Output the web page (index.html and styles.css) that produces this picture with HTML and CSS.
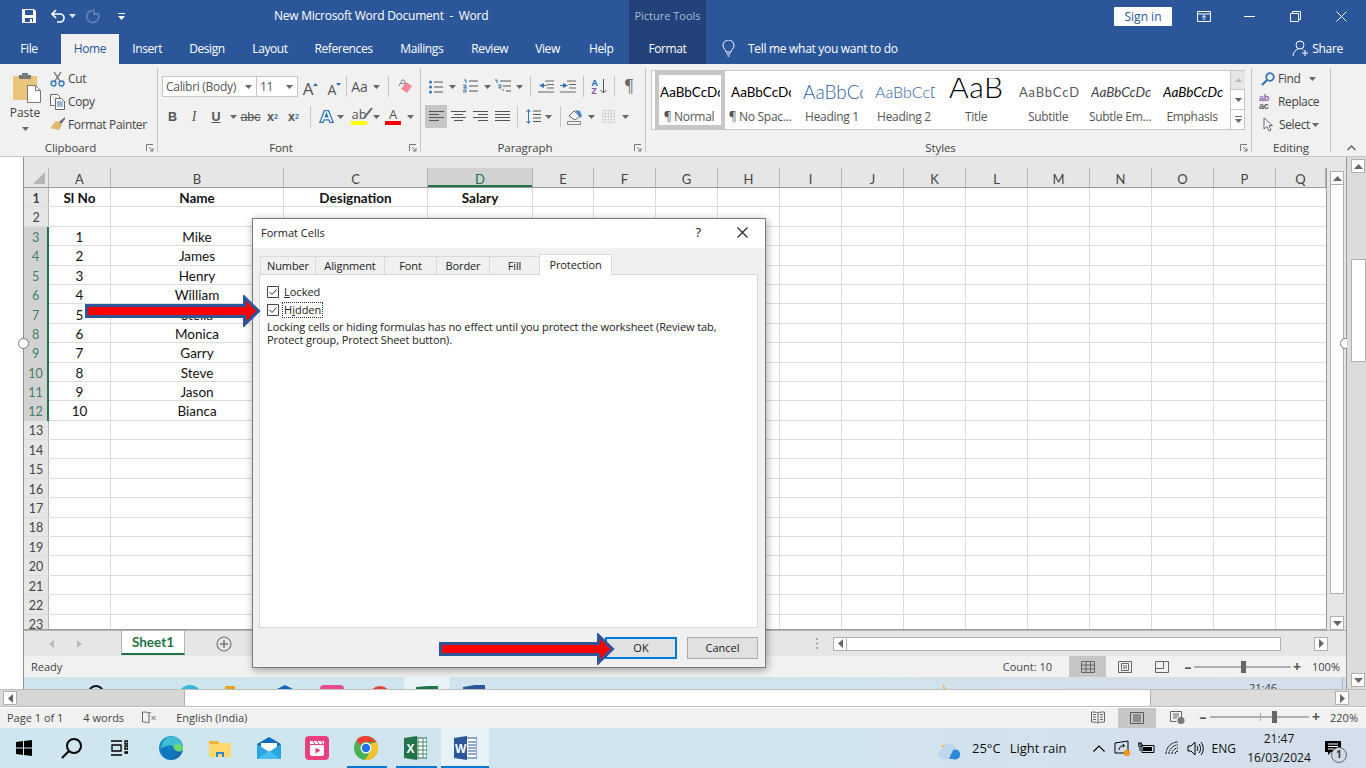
FILE: index.html
```html
<!DOCTYPE html>
<html lang="en">
<head>
<meta charset="utf-8">
<title>New Microsoft Word Document - Word</title>
<link rel="stylesheet" href="styles.css">
</head>
<body>
<div class="app">

<header class="titlebar">
  <div class="qat">
    <svg class="qi" width="16" height="16" viewBox="0 0 16 16"><path d="M1 1h12l2 2v12H1z" fill="#fff"/><path d="M4 2h8v5H4z" fill="#2b579a"/><path d="M4 10h8v4H4z" fill="#2b579a"/><path d="M9 11h2v3H9z" fill="#fff"/></svg>
    <svg class="qi2" width="16" height="16" viewBox="0 0 16 16"><path d="M6 2 2 6l4 4M2.500 6H10a4 4 0 0 1 0 8H7" fill="none" stroke="#fff" stroke-width="1.700"/></svg>
    <svg class="qc" width="7" height="4" viewBox="0 0 7 4"><path d="M0 0h7L3.500 4z" fill="#dfe6f1"/></svg>
    <svg class="qi3" width="15" height="16" viewBox="0 0 15 16"><path d="M9 1v5h5M13 5.500A6 6 0 1 1 7.500 2.500" fill="none" stroke="#5e80b4" stroke-width="1.800"/></svg>
    <svg class="qc2" width="7" height="7" viewBox="0 0 7 7"><path d="M0 0h7v1H0zM0 3h7L3.500 7z" fill="#fff"/></svg>
  </div>
  <div class="doc-title">New Microsoft Word Document&nbsp; -&nbsp; Word</div>
  <div class="tools-title">Picture Tools</div>
  <div class="win">
    <span class="signin">Sign in</span>
    <svg class="w-opt" width="14" height="11" viewBox="0 0 14 11"><path d="M.5.500h13v10H.500zM.5 3h13M7 9V4.500M5 6.500l2-2 2 2" fill="none" stroke="#fff"/></svg>
    <svg class="w-min" width="11" height="1" viewBox="0 0 11 1"><path d="M0 0h11v1H0z" fill="#fff"/></svg>
    <svg class="w-max" width="11" height="11" viewBox="0 0 11 11"><path d="M.5 2.500h8v8h-8zM2.500 2.500v-2h8v8h-2" fill="none" stroke="#fff"/></svg>
    <svg class="w-close" width="11" height="11" viewBox="0 0 11 11"><path d="M.5.500l10 10M10.500.500l-10 10" stroke="#fff" fill="none"/></svg>
  </div>
</header>

<nav class="tabs">
  <span class="tab t-file">File</span>
  <span class="tab home">Home</span>
  <span class="tab t-ins">Insert</span>
  <span class="tab t-des">Design</span>
  <span class="tab t-lay">Layout</span>
  <span class="tab t-ref">References</span>
  <span class="tab t-mai">Mailings</span>
  <span class="tab t-rev">Review</span>
  <span class="tab t-vie">View</span>
  <span class="tab t-hel">Help</span>
  <span class="tab format">Format</span>
  <svg class="bulb" width="13" height="17" viewBox="0 0 13 17"><path d="M4 12c0-2-3-3.500-3-6.500a5.500 5.500 0 0 1 11 0C12 8.500 9 10 9 12zM4.500 14h4M5.500 16h2" fill="none" stroke="#fff"/></svg>
  <span class="tell">Tell me what you want to do</span>
  <span class="share">
    <svg width="17" height="17" viewBox="0 0 17 17"><circle cx="8" cy="5" r="4" fill="none" stroke="#fff"/><path d="M1 16c0-4 3-6 5-7M11 9.500l1 1M10 13h6M13 10v6" fill="none" stroke="#fff"/></svg>
    Share
  </span>
</nav>

<section class="ribbon">
  <div class="group g-clip">
    <div class="g-body clip-body">
      <div class="paste">
        <svg width="30" height="31" viewBox="0 0 30 31"><path d="M1 4h24v24H1z" fill="#e9c47c"/><path d="M7 3h12v4H7z" fill="#7a7a7a"/><path d="M10 1h6v3h-6z" fill="#7a7a7a"/><path d="M15.500 13.500h8l5 5v12h-13z" fill="#fff" stroke="#777"/><path d="M23.500 13.500v5h5" fill="none" stroke="#777"/></svg>
        <span class="paste-l">Paste</span>
        <svg class="caret paste-c" width="7" height="4" viewBox="0 0 7 4"><path d="M0 0h7L3.500 4z"/></svg>
      </div>
      <div class="clip-list">
        <div class="clip-row"><svg width="15" height="16" viewBox="0 0 15 16"><path d="M4 1l6 9M11 1 5 10" stroke="#666" stroke-width="1.300" fill="none"/><circle cx="3.500" cy="12.500" r="2.500" fill="none" stroke="#2f75b5" stroke-width="1.300"/><circle cx="11.500" cy="12.500" r="2.500" fill="none" stroke="#2f75b5" stroke-width="1.300"/></svg>Cut</div>
        <div class="clip-row"><svg width="15" height="16" viewBox="0 0 15 16"><path d="M.5.500h7l2 2v2M.5.500v11h4" fill="#fff" stroke="#666"/><path d="M5.500 4.500h6l3 3v8h-9z" fill="#fff" stroke="#666"/><path d="M7 8h6M7 10h6M7 12h6" stroke="#2f75b5"/></svg>Copy</div>
        <div class="clip-row"><svg width="15" height="15" viewBox="0 0 15 15"><path d="M15 0 9 5l2 2 4-5z" fill="#666"/><path d="M8 4l4 4-3 5-9-2 3-2-2-1 3-1 0-2z" fill="#e0b870"/></svg>Format Painter</div>
      </div>
    </div>
    <div class="g-label">Clipboard<svg class="launch" width="8" height="8" viewBox="0 0 8 8"><path d="M.5 7V.5H7M3 3l4 4M4 7h3V4" fill="none" stroke="#777"/></svg></div>
  </div>

  <div class="group g-font">
    <div class="g-body font-body">
      <div class="t-row r1">
        <span class="combo c-name">Calibri (Body)<svg class="caret" width="7" height="4" viewBox="0 0 7 4"><path d="M0 0h7L3.500 4z"/></svg></span>
        <span class="combo c-size">11<svg class="caret" width="7" height="4" viewBox="0 0 7 4"><path d="M0 0h7L3.500 4z"/></svg></span>
        <span class="c w25 glyph-a big">A<svg class="up" width="5" height="3" viewBox="0 0 5 3"><path d="M0 3h5L2.500 0z" fill="#2f75b5"/></svg></span>
        <span class="c w23 glyph-a small">A<svg class="up" width="5" height="3" viewBox="0 0 5 3"><path d="M0 0h5L2.500 3z" fill="#2f75b5"/></svg></span>
        <span class="sep"></span>
        <span class="c w25 aa">Aa</span>
        <span class="c w8"><svg class="caret" width="7" height="4" viewBox="0 0 7 4"><path d="M0 0h7L3.500 4z"/></svg></span>
        <span class="sep ml8"></span>
        <span class="c w32"><svg width="15" height="15" viewBox="0 0 15 15"><path d="M8 3l6 4-5 7-6-4z" fill="#f28a98"/><path d="M1 7 4 1h2l2 5M2.500 4.500h4" fill="none" stroke="#888"/></svg></span>
      </div>
      <div class="t-row r2">
        <span class="c w21 bi b">B</span>
        <span class="c w22 bi i">I</span>
        <span class="c w22 bi u">U</span>
        <span class="c w12"><svg class="caret" width="7" height="4" viewBox="0 0 7 4"><path d="M0 0h7L3.500 4z"/></svg></span>
        <span class="c w23 bi st">abc</span>
        <span class="c w21 bi">x<sub class="sb">2</sub></span>
        <span class="c w21 bi">x<sup class="sb">2</sup></span>
        <span class="sep sep2"></span>
        <span class="c w19"><svg width="15" height="15" viewBox="0 0 18 17"><path d="M6.500 1.500h5L17 15.500h-4l-1-3H6l-1 3H1zM7.500 9h3L9 5z" fill="#fff" stroke="#2f75b5" stroke-width="1.600"/></svg></span>
        <span class="c w8"><svg class="caret" width="7" height="4" viewBox="0 0 7 4"><path d="M0 0h7L3.500 4z"/></svg></span>
        <span class="c w26 col ml2"><span class="hl-t">ab<svg class="hl-pen" width="10" height="11" viewBox="0 0 10 11"><path d="M9 0 1 10" stroke="#666" stroke-width="2"/></svg></span><i class="bar yel"></i></span>
        <span class="c w8"><svg class="caret" width="7" height="4" viewBox="0 0 7 4"><path d="M0 0h7L3.500 4z"/></svg></span>
        <span class="c w26 col"><span class="fc-t">A</span><i class="bar red"></i></span>
        <span class="c w8"><svg class="caret" width="7" height="4" viewBox="0 0 7 4"><path d="M0 0h7L3.500 4z"/></svg></span>
      </div>
    </div>
    <div class="g-label">Font<svg class="launch" width="8" height="8" viewBox="0 0 8 8"><path d="M.5 7V.5H7M3 3l4 4M4 7h3V4" fill="none" stroke="#777"/></svg></div>
  </div>

  <div class="group g-para">
    <div class="g-body para-body">
      <div class="t-row r1 p1">
        <span class="c w22"><svg width="14" height="14" viewBox="0 0 14 14"><path d="M5 2h9M5 7h9M5 12h9" stroke="#555"/><circle cx="1.500" cy="2" r="1.500" fill="#2f75b5"/><circle cx="1.500" cy="7" r="1.500" fill="#2f75b5"/><circle cx="1.500" cy="12" r="1.500" fill="#2f75b5"/></svg></span>
        <span class="c w10"><svg class="caret" width="7" height="4" viewBox="0 0 7 4"><path d="M0 0h7L3.500 4z"/></svg></span>
        <span class="c w26"><svg width="15" height="15" viewBox="0 0 15 15"><path d="M6 2h9M6 7h9M6 12h9" stroke="#555"/><path d="M1 1h2v3M0 6h3v2H1v1h3M0 11h3v2H0" fill="none" stroke="#2f75b5"/></svg></span>
        <span class="c w8"><svg class="caret" width="7" height="4" viewBox="0 0 7 4"><path d="M0 0h7L3.500 4z"/></svg></span>
        <span class="c w24"><svg width="16" height="15" viewBox="0 0 16 15"><path d="M5 2h11M8 7h8M11 12h5" stroke="#555"/><path d="M0 1h2v3M3 6h3v2H4v1h2M7 11h2" fill="none" stroke="#2f75b5"/></svg></span>
        <span class="c w8"><svg class="caret" width="7" height="4" viewBox="0 0 7 4"><path d="M0 0h7L3.500 4z"/></svg></span>
        <span class="sep ml7"></span>
        <span class="c w22 ml4"><svg width="16" height="13" viewBox="0 0 16 13"><path d="M7 1h9M9 4.500h7M9 8h7M0 12h16" stroke="#666"/><path d="M6 3v5L1 5.500zM6 5h3v1H6z" fill="#2f75b5"/></svg></span>
        <span class="c w22"><svg width="16" height="13" viewBox="0 0 16 13"><path d="M7 1h9M9 4.500h7M9 8h7M0 12h16" stroke="#666"/><path d="M3 3v5l5-2.500zM0 5h3v1H0z" fill="#2f75b5"/></svg></span>
        <span class="sep ml4"></span>
        <span class="c w30"><span class="az"><b>A</b><b class="z">Z</b></span><svg width="7" height="15" viewBox="0 0 7 15"><path d="M3.500 0v14M.5 11l3 3 3-3" fill="none" stroke="#555"/></svg></span>
        <span class="sep"></span>
        <span class="c w28 pil">¶</span>
      </div>
      <div class="t-row r2 p2">
        <span class="c w22 on"><svg width="15" height="11" viewBox="0 0 15 11"><path d="M0 .5h15M0 3.500h10M0 6.500h15M0 9.500h10" stroke="#555"/></svg></span>
        <span class="c w22"><svg width="15" height="11" viewBox="0 0 15 11"><path d="M0 .5h15M3 3.500h9M0 6.500h15M3 9.500h9" stroke="#555"/></svg></span>
        <span class="c w22"><svg width="15" height="11" viewBox="0 0 15 11"><path d="M0 .5h15M5 3.500h10M0 6.500h15M5 9.500h10" stroke="#555"/></svg></span>
        <span class="c w22"><svg width="15" height="11" viewBox="0 0 15 11"><path d="M0 .5h15M0 3.500h15M0 6.500h15M0 9.500h15" stroke="#555"/></svg></span>
        <span class="sep ml4"></span>
        <span class="c w22 ml4"><svg width="15" height="15" viewBox="0 0 15 15"><path d="M7 2h8M7 5.500h8M7 9h8M7 12.500h8" stroke="#555"/><path d="M2.500 1v13M.5 3l2-2.500 2 2.500M.5 12l2 2.500 2-2.500" fill="none" stroke="#2f75b5"/></svg></span>
        <span class="c w8"><svg class="caret" width="7" height="4" viewBox="0 0 7 4"><path d="M0 0h7L3.500 4z"/></svg></span>
        <span class="sep ml8"></span>
        <span class="c w24 ml2"><svg width="17" height="16" viewBox="0 0 17 16"><path d="M2 7l5-5 6 5-5 4z" fill="#fff" stroke="#666"/><path d="M8 1l5 1 2 5-2 2z" fill="#2f75b5" opacity=".85"/><path d="M.5 12.500h13v3H.500z" fill="#f1f1f1" stroke="#888"/></svg></span>
        <span class="c w8"><svg class="caret" width="7" height="4" viewBox="0 0 7 4"><path d="M0 0h7L3.500 4z"/></svg></span>
        <span class="c w26"><svg width="13" height="13" viewBox="0 0 13 13"><path d="M.5.500h12v12H.500zM.5 6.500h12M6.500.500v12M3.500.500v12M9.500.500v12M.5 3.500h12M.5 9.500h12" fill="none" stroke="#c8bcc8" stroke-dasharray="1 1"/></svg></span>
        <span class="c w8"><svg class="caret" width="7" height="4" viewBox="0 0 7 4"><path d="M0 0h7L3.500 4z"/></svg></span>
      </div>
    </div>
    <div class="g-label">Paragraph<svg class="launch" width="8" height="8" viewBox="0 0 8 8"><path d="M.5 7V.5H7M3 3l4 4M4 7h3V4" fill="none" stroke="#777"/></svg></div>
  </div>

  <div class="group g-styles">
    <div class="g-body">
      <div class="gallery">
        <div class="sty first"><span class="pv pv-n">AaBbCcDc</span><span class="sl">¶ Normal</span></div>
        <div class="sty"><span class="pv pv-n">AaBbCcDc</span><span class="sl">¶ No Spac...</span></div>
        <div class="sty"><span class="pv pv-h1">AaBbCc</span><span class="sl">Heading 1</span></div>
        <div class="sty"><span class="pv pv-h2">AaBbCcD</span><span class="sl">Heading 2</span></div>
        <div class="sty"><span class="pv pv-t">AaB</span><span class="sl">Title</span></div>
        <div class="sty"><span class="pv pv-s">AaBbCcD</span><span class="sl">Subtitle</span></div>
        <div class="sty"><span class="pv pv-se">AaBbCcDc</span><span class="sl">Subtle Em...</span></div>
        <div class="sty"><span class="pv pv-e">AaBbCcDc</span><span class="sl">Emphasis</span></div>
        <div class="gal-sb">
          <span class="gb dim"><svg width="7" height="4" viewBox="0 0 7 4"><path d="M0 4h7L3.500 0z" fill="#bbb"/></svg></span>
          <span class="gb"><svg width="7" height="4" viewBox="0 0 7 4"><path d="M0 0h7L3.500 4z" fill="#666"/></svg></span>
          <span class="gb"><svg width="7" height="7" viewBox="0 0 7 7"><path d="M0 0h7v1H0zM0 3h7L3.500 7z" fill="#666"/></svg></span>
        </div>
      </div>
    </div>
    <div class="g-label">Styles<svg class="launch" width="8" height="8" viewBox="0 0 8 8"><path d="M.5 7V.5H7M3 3l4 4M4 7h3V4" fill="none" stroke="#777"/></svg></div>
  </div>

  <div class="group g-edit">
    <div class="g-body edit-body">
      <div class="clip-row"><svg width="14" height="14" viewBox="0 0 14 14"><circle cx="9" cy="5" r="3.800" fill="none" stroke="#2f75b5" stroke-width="1.800"/><path d="M6 8l-5 5" stroke="#2f75b5" stroke-width="2.200"/></svg>Find<svg class="caret e-c" width="7" height="4" viewBox="0 0 7 4"><path d="M0 0h7L3.500 4z"/></svg></div>
      <div class="clip-row rep"><span class="abac"><b class="ab">ab</b><b class="ac">ac</b></span>Replace</div>
      <div class="clip-row sel"><svg width="10" height="15" viewBox="0 0 10 15"><path d="M1 1v11l3-2.500 2 4.500 2-1-2-4.500h3.500z" fill="#fff" stroke="#666"/></svg>Select<svg class="caret s-c" width="7" height="4" viewBox="0 0 7 4"><path d="M0 0h7L3.500 4z"/></svg></div>
    </div>
    <div class="g-label g-plain">Editing</div>
  </div>
  <svg class="collapse" width="9" height="6" viewBox="0 0 9 6"><path d="M.5 5l4-4 4 4" fill="none" stroke="#666" stroke-width="1.500"/></svg>
</section>

<main class="doc">
  <div class="picture">
    <div class="sheet-wrap">
      <div class="sheet">
        <div class="row hdr"><span class="rh corner"><svg width="12" height="12" viewBox="0 0 12 12"><path d="M12 0v12H0z" fill="#b5b5b5"/></svg></span><span class="ca">A</span><span class="cb">B</span><span class="cc">C</span><span class="cd act">D</span><span class="ce">E</span><span class="ch">F</span><span class="ch">G</span><span class="ch">H</span><span class="ch">I</span><span class="ch">J</span><span class="ch">K</span><span class="ch">L</span><span class="ch">M</span><span class="ch">N</span><span class="ch">O</span><span class="ch">P</span><span class="cq">Q</span></div>
        <div class="row bold"><span class="rh">1</span><span class="ca">Sl No</span><span class="cb">Name</span><span class="cc">Designation</span><span class="cd">Salary</span><span class="ce"></span><span class="rest"></span></div>
        <div class="row"><span class="rh">2</span><span class="ca"></span><span class="cb"></span><span class="cc"></span><span class="cd"></span><span class="ce"></span><span class="rest"></span></div>
        <div class="row"><span class="rh sel">3</span><span class="ca">1</span><span class="cb">Mike</span><span class="cc"></span><span class="cd"></span><span class="ce"></span><span class="rest"></span></div>
        <div class="row"><span class="rh sel">4</span><span class="ca">2</span><span class="cb">James</span><span class="cc"></span><span class="cd"></span><span class="ce"></span><span class="rest"></span></div>
        <div class="row"><span class="rh sel">5</span><span class="ca">3</span><span class="cb">Henry</span><span class="cc"></span><span class="cd"></span><span class="ce"></span><span class="rest"></span></div>
        <div class="row"><span class="rh sel">6</span><span class="ca">4</span><span class="cb">William</span><span class="cc"></span><span class="cd"></span><span class="ce"></span><span class="rest"></span></div>
        <div class="row"><span class="rh sel">7</span><span class="ca">5</span><span class="cb">Stella</span><span class="cc"></span><span class="cd"></span><span class="ce"></span><span class="rest"></span></div>
        <div class="row"><span class="rh sel">8</span><span class="ca">6</span><span class="cb">Monica</span><span class="cc"></span><span class="cd"></span><span class="ce"></span><span class="rest"></span></div>
        <div class="row"><span class="rh sel">9</span><span class="ca">7</span><span class="cb">Garry</span><span class="cc"></span><span class="cd"></span><span class="ce"></span><span class="rest"></span></div>
        <div class="row"><span class="rh sel">10</span><span class="ca">8</span><span class="cb">Steve</span><span class="cc"></span><span class="cd"></span><span class="ce"></span><span class="rest"></span></div>
        <div class="row"><span class="rh sel">11</span><span class="ca">9</span><span class="cb">Jason</span><span class="cc"></span><span class="cd"></span><span class="ce"></span><span class="rest"></span></div>
        <div class="row"><span class="rh sel">12</span><span class="ca">10</span><span class="cb">Bianca</span><span class="cc"></span><span class="cd"></span><span class="ce"></span><span class="rest"></span></div>
        <div class="row"><span class="rh">13</span><span class="ca"></span><span class="cb"></span><span class="cc"></span><span class="cd"></span><span class="ce"></span><span class="rest"></span></div>
        <div class="row"><span class="rh">14</span><span class="ca"></span><span class="cb"></span><span class="cc"></span><span class="cd"></span><span class="ce"></span><span class="rest"></span></div>
        <div class="row"><span class="rh">15</span><span class="ca"></span><span class="cb"></span><span class="cc"></span><span class="cd"></span><span class="ce"></span><span class="rest"></span></div>
        <div class="row"><span class="rh">16</span><span class="ca"></span><span class="cb"></span><span class="cc"></span><span class="cd"></span><span class="ce"></span><span class="rest"></span></div>
        <div class="row"><span class="rh">17</span><span class="ca"></span><span class="cb"></span><span class="cc"></span><span class="cd"></span><span class="ce"></span><span class="rest"></span></div>
        <div class="row"><span class="rh">18</span><span class="ca"></span><span class="cb"></span><span class="cc"></span><span class="cd"></span><span class="ce"></span><span class="rest"></span></div>
        <div class="row"><span class="rh">19</span><span class="ca"></span><span class="cb"></span><span class="cc"></span><span class="cd"></span><span class="ce"></span><span class="rest"></span></div>
        <div class="row"><span class="rh">20</span><span class="ca"></span><span class="cb"></span><span class="cc"></span><span class="cd"></span><span class="ce"></span><span class="rest"></span></div>
        <div class="row"><span class="rh">21</span><span class="ca"></span><span class="cb"></span><span class="cc"></span><span class="cd"></span><span class="ce"></span><span class="rest"></span></div>
        <div class="row"><span class="rh">22</span><span class="ca"></span><span class="cb"></span><span class="cc"></span><span class="cd"></span><span class="ce"></span><span class="rest"></span></div>
        <div class="row"><span class="rh">23</span><span class="ca"></span><span class="cb"></span><span class="cc"></span><span class="cd"></span><span class="ce"></span><span class="rest"></span></div>
      </div>
      <div class="x-vscroll">
        <span class="sbtn"><svg width="9" height="5" viewBox="0 0 9 5"><path d="M0 5h9L4.500 0z" fill="#666"/></svg></span>
        <span class="x-thumb"></span>
        <span class="sbtn"><svg width="9" height="5" viewBox="0 0 9 5"><path d="M0 0h9L4.500 5z" fill="#666"/></svg></span>
      </div>
    </div>
    <div class="sheet-tabs">
      <svg class="nav-l" width="5" height="8" viewBox="0 0 5 8"><path d="M5 0v8L0 4z" fill="#bbb"/></svg>
      <svg class="nav-r" width="5" height="8" viewBox="0 0 5 8"><path d="M0 0v8l5-4z" fill="#bbb"/></svg>
      <span class="s-tab">Sheet1</span>
      <svg class="plus" width="16" height="16" viewBox="0 0 16 16"><circle cx="8" cy="8" r="7" fill="none" stroke="#777" stroke-width="1.200"/><path d="M4 8h8M8 4v8" stroke="#777" stroke-width="1.500"/></svg>
      <svg class="dots" width="2" height="11" viewBox="0 0 2 11"><path d="M0 0h2v2H0zM0 4.500h2v2H0zM0 9h2v2H0z" fill="#aaa"/></svg>
      <div class="x-hscroll">
        <span class="sbtn"><svg width="5" height="9" viewBox="0 0 5 9"><path d="M5 0v9L0 4.500z" fill="#666"/></svg></span>
        <span class="x-hthumb"></span>
        <span class="sbtn"><svg width="5" height="9" viewBox="0 0 5 9"><path d="M0 0v9l5-4.500z" fill="#666"/></svg></span>
      </div>
    </div>
    <div class="x-status">
      <span class="ready">Ready</span>
      <span class="count">Count: 10</span>
      <span class="v-btn on"><svg width="14" height="12" viewBox="0 0 14 12"><path d="M.5.500h13v11H.500zM5 .5v11M9.500.500v11M.5 4h13M.5 8h13" fill="none" stroke="#666"/></svg></span>
      <span class="v-btn"><svg width="14" height="12" viewBox="0 0 14 12"><path d="M.5.500h13v11H.500zM3.500 2.500h7v7h-7zM5 5h4M5 7h4" fill="none" stroke="#666"/></svg></span>
      <span class="v-btn"><svg width="14" height="12" viewBox="0 0 14 12"><path d="M.5.500h13v11H.500zM.5 7.500h8V.500" fill="none" stroke="#666"/></svg></span>
      <span class="zoomer x-z"><i class="zm">–</i><span class="track"><b class="thumb"></b></span><i class="zp">+</i></span>
      <span class="pct">100%</span>
    </div>
    <svg class="strip" width="1322" height="12" viewBox="0 0 1322 12">
      <defs><linearGradient id="sg"><stop offset="0" stop-color="#cfe6ef"/><stop offset=".55" stop-color="#d0e4ee"/><stop offset="1" stop-color="#d5deeb"/></linearGradient></defs>
      <rect width="1322" height="12" fill="url(#sg)"/>
      <rect x="380" width="46" height="12" fill="#e8f3f8"/>
      <circle cx="72" cy="16" r="7" fill="none" stroke="#111" stroke-width="2"/>
      <circle cx="166" cy="20" r="12" fill="#30b9d8"/>
      <rect x="201" y="9" width="10" height="3" fill="#e8a21b"/>
      <path d="M261 8l8 4h-16z" fill="#0f6cbd"/>
      <rect x="296" y="8" width="24" height="8" rx="4" fill="#ec4a8f"/>
      <circle cx="356" cy="20" r="11" fill="#e94235"/>
      <path d="M392 10l12-1h10v3h-22z" fill="#21734a"/>
      <path d="M439 10l12-2h10v4h-22z" fill="#2b579a"/>
      <path d="M919 7l3 5h-3z" fill="#eebb55"/>
      <text x="1225" y="15" class="strip-t">21:46</text>
      <path d="M1318.500 0v12" stroke="#a9b4c4"/>
    </svg>
    <span class="handle h-l"></span>
    <span class="handle h-r"></span>
  </div>
  <div class="w-vscroll">
    <span class="sbtn"><svg width="9" height="5" viewBox="0 0 9 5"><path d="M0 5h9L4.500 0z" fill="#666"/></svg></span>
    <span class="w-thumb"></span>
    <span class="sbtn"><svg width="9" height="5" viewBox="0 0 9 5"><path d="M0 0h9L4.500 5z" fill="#666"/></svg></span>
  </div>
</main>

<div class="w-hscroll">
  <span class="sbtn"><svg width="5" height="9" viewBox="0 0 5 9"><path d="M5 0v9L0 4.500z" fill="#666"/></svg></span>
  <span class="w-htrack"></span>
  <span class="w-hthumb"></span>
  <span class="w-htrack2"></span>
  <span class="sbtn"><svg width="5" height="9" viewBox="0 0 5 9"><path d="M0 0v9l5-4.500z" fill="#666"/></svg></span>
</div>

<div class="w-status">
  <span class="st-a">Page 1 of 1</span>
  <span class="st-b">4 words</span>
  <svg class="st-i" width="14" height="13" viewBox="0 0 14 13"><path d="M7 2C5 1 3 1 .5 1v10c2.500 0 4.500 0 6.500 1V2M7 2c.500-.300 1-.500 2-.700" fill="none" stroke="#666"/><path d="M9.500 5l4 4M13.500 5l-4 4" stroke="#666"/></svg>
  <span class="st-c">English (India)</span>
  <svg class="st-v1" width="14" height="13" viewBox="0 0 14 13"><path d="M7 2C5 1 3 1 .5 1v10c2.500 0 4.500 0 6.500 1 2-1 4-1 6.500-1V1C11 1 9 1 7 2zM7 2v10M2 3.500h3M2 6h3M2 8.500h3M9 3.500h3M9 6h3M9 8.500h3" fill="none" stroke="#666"/></svg>
  <span class="v-btn2"><svg width="14" height="12" viewBox="0 0 14 12"><path d="M.5.500h13v11H.500zM3 3h8M3 5h8M3 7h8M3 9h8" fill="none" stroke="#555"/></svg></span>
  <svg class="st-v3" width="15" height="13" viewBox="0 0 15 13"><path d="M.5.500h11v7M.5.500v10h6M3 3h6M3 5h6M3 7h4" fill="none" stroke="#666"/><circle cx="11" cy="9.500" r="3.500" fill="#777"/></svg>
  <span class="zoomer w-z"><i class="zm">–</i><span class="track"><u class="tick"></u><b class="thumb"></b></span><i class="zp">+</i></span>
  <span class="pct">220%</span>
</div>

<footer class="taskbar">
  <svg class="tb-win" width="16" height="16" viewBox="0 0 16 16"><path d="M0 2l7-1v6.500H0zM8 1l8-1v7.500H8zM0 8.500h7V15l-7-1zM8 8.500h8V16l-8-1z" fill="#000"/></svg>
  <svg class="tb-search" width="22" height="22" viewBox="0 0 22 22"><circle cx="13" cy="9" r="7" fill="none" stroke="#000" stroke-width="2"/><path d="M8 14l-7 7" stroke="#000" stroke-width="2.200"/></svg>
  <svg class="tb-tv" width="17" height="16" viewBox="0 0 17 16"><path d="M0 1h11M0 15h11M1 5h9v6H1zM14 1h3v3h-3zM14 6h3v3h-3zM14 13h3v-1h-3z" fill="none" stroke="#000" stroke-width="1.300"/></svg>
  <svg class="tb-edge" width="24" height="24" viewBox="0 0 24 24"><defs><linearGradient id="eg" x1="0" y1="0" x2="1" y2="1"><stop offset="0" stop-color="#1d9bd8"/><stop offset="1" stop-color="#0b5fa8"/></linearGradient></defs><circle cx="12" cy="12" r="12" fill="url(#eg)"/><path d="M13 .500C19 1 24 6 24 12c0 3-3 4-6 3-4-1-2-5-6-6-3 0-6 1-10 4C3 6 7 0 13 .500z" fill="#3fbfd0"/><path d="M24 12c0 3-3 4-6 3-3-1-3-3-4-5 3-3 8-3 10 2z" fill="#6fd66a"/><path d="M9 13c0 4 4 7 9 6-2 3-6 5-9 4-4-1-6-6-7-10 2-2 6-3 7 0z" fill="#0f75bc"/></svg>
  <svg class="tb-exp" width="22" height="18" viewBox="0 0 22 18"><path d="M0 2h8v3H0z" fill="#e8a21b"/><path d="M0 4h22v14H0z" fill="#ffd76a"/><path d="M0 2h9l1 3H0z" fill="#f2b233"/><path d="M7 13h8v5H7z" fill="#2f86c9"/><path d="M9 15h4v3H9z" fill="#ffd76a"/></svg>
  <svg class="tb-mail" width="24" height="22" viewBox="0 0 24 22"><path d="M12 0 24 7v15H0V7z" fill="#0f6cbd"/><path d="M4 6h16v6l-8 5-8-5z" fill="#fff"/><path d="M0 7l12 8 12-8v15H0z" fill="#29a5e4"/><path d="M0 22l12-8 12 8z" fill="#49bdf0"/></svg>
  <svg class="tb-clip" width="24" height="24" viewBox="0 0 24 24"><rect width="24" height="24" rx="4" fill="#e9407f"/><path d="M5 9h14v9a2 2 0 0 1-2 2H7a2 2 0 0 1-2-2z" fill="#fff"/><path d="M5 5h14v3H5z" fill="#fff"/><path d="M8 5l2 3M12 5l2 3M16 5l2 3" stroke="#e9407f"/><path d="M10.500 11.500v6l5-3z" fill="#e9407f"/></svg>
  <svg class="tb-chrome" width="24" height="24" viewBox="0 0 24 24"><circle cx="12" cy="12" r="12" fill="#4caf50"/><path d="M12 0a12 12 0 0 1 10.400 6H12a6 6 0 0 0-5.600 3.600L2.400 4A12 12 0 0 1 12 0z" fill="#ea4335"/><path d="M22.400 6A12 12 0 0 1 11 24l5.200-8.500A6 6 0 0 0 16 8z" fill="#fbc02d"/><circle cx="12" cy="12" r="5.500" fill="#fff"/><circle cx="12" cy="12" r="4.200" fill="#1a73e8"/></svg>
  <svg class="tb-xl" width="23" height="24" viewBox="0 0 23 24"><path d="M8 2h15v20H8z" fill="#fff" stroke="#21734a"/><path d="M14 2v20M19 2v20M8 6h15M8 10h15M8 14h15M8 18h15" stroke="#21734a" stroke-width=".8"/><path d="M0 2 13 0v24L0 22z" fill="#21734a"/><text x="2.500" y="16.500" class="logo-t">X</text></svg>
  <svg class="tb-wd" width="23" height="24" viewBox="0 0 23 24"><path d="M8 2h15v20H8z" fill="#fff" stroke="#2b579a"/><path d="M14 6h8M14 9h8M14 12h8M14 15h8M14 18h8" stroke="#2b579a"/><path d="M0 2 13 0v24L0 22z" fill="#2b579a"/><text x="1" y="16.500" class="logo-t">W</text></svg>
  <svg class="tb-wx" width="24" height="24" viewBox="0 0 24 24"><path d="M10 2a7 7 0 0 0 8 9 7 7 0 0 1-8-9z" fill="#f3b13a"/><path d="M4 10l4 1" stroke="#f3b13a" stroke-width="2"/><path d="M6 23a5 5 0 0 1-1-10 7 7 0 0 1 13-1 6 6 0 0 1 1 11z" fill="#bcd6ee"/><path d="M15 14a5 5 0 1 1 0 9h-4z" fill="#2b88d8"/></svg>
  <span class="tb-temp">25°C</span>
  <span class="tb-cond">Light rain</span>
  <svg class="tb-up" width="12" height="7" viewBox="0 0 12 7"><path d="M.5 6.500 6 1l5.500 5.500" fill="none" stroke="#000" stroke-width="1.200"/></svg>
  <svg class="tb-sec" width="17" height="16" viewBox="0 0 17 16"><path d="M1 3l13-2v12H1z" fill="none" stroke="#000"/><path d="M5 10c0-3 3-5 5-4M9 4l1.500 2-2 1" fill="none" stroke="#000"/><circle cx="13" cy="13" r="3.200" fill="#f7931e"/></svg>
  <svg class="tb-bat" width="17" height="12" viewBox="0 0 17 12"><path d="M4 3.500h12v7H4z" fill="none" stroke="#000"/><path d="M5 5h9v4H5z" fill="#000"/><path d="M1 0v2M3 0v2M0 2h4v2H0zM2 4v5" fill="none" stroke="#000"/></svg>
  <svg class="tb-wifi" width="14" height="14" viewBox="0 0 14 14"><path d="M1 13a12 12 0 0 1 12-12M4 13a9 9 0 0 1 9-9M7 13a6 6 0 0 1 6-6M10 13a3 3 0 0 1 3-3" fill="none" stroke="#000" stroke-dasharray="2 .6"/></svg>
  <svg class="tb-vol" width="17" height="15" viewBox="0 0 17 15"><path d="M1 5h3l4-4v13l-4-4H1zM10 5c1 1.500 1 3.500 0 5M12 3c2 2.500 2 6.500 0 9M14 1c3 4 3 9 0 13" fill="none" stroke="#000"/></svg>
  <span class="tb-eng">ENG</span>
  <span class="tb-clock"><span>21:47</span><span>16/03/2024</span></span>
  <span class="tb-note"><svg width="16" height="14" viewBox="0 0 16 14"><path d="M0 0h16v11H6l-3 3v-3H0z" fill="#000"/><path d="M3 3h10M3 5.500h10M3 8h6" stroke="#fff"/></svg><span class="badge">1</span></span>
  <i class="run run-ch"></i>
  <i class="run run-xl"></i>
  <i class="active-tile"></i>
</footer>

<section class="dialog">
  <div class="d-title"><span>Format Cells</span><span class="d-help">?</span><svg class="d-x" width="11" height="11" viewBox="0 0 11 11"><path d="M.5.500l10 10M10.500.500l-10 10" stroke="#222" fill="none" stroke-width="1.100"/></svg></div>
  <div class="d-tabs">
    <span class="d-tab t1">Number</span><span class="d-tab t2">Alignment</span><span class="d-tab t3">Font</span><span class="d-tab t4">Border</span><span class="d-tab t5">Fill</span><span class="d-tab active">Protection</span>
  </div>
  <div class="d-panel">
    <div class="chk"><svg width="12" height="12" viewBox="0 0 12 12"><path d="M.5.500h11v11H.500z" fill="#fff" stroke="#444"/><path d="M2.500 6l2.500 2.500 4.500-5" fill="none" stroke="#333"/></svg><span class="lab"><u>L</u>ocked</span></div>
    <div class="chk"><svg width="12" height="12" viewBox="0 0 12 12"><path d="M.5.500h11v11H.500z" fill="#fff" stroke="#444"/><path d="M2.500 6l2.500 2.500 4.500-5" fill="none" stroke="#333"/></svg><span class="lab focus">H<u>i</u>dden</span></div>
    <p class="d-note">Locking cells or hiding formulas has no effect until you protect the worksheet (Review tab,<br>Protect group, Protect Sheet button).</p>
  </div>
  <div class="d-btns"><span class="d-btn ok">OK</span><span class="d-btn">Cancel</span></div>
</section>

<svg class="arrow a1" width="178" height="32" viewBox="0 0 178 32"><path d="M2.500 10.500h158v-8l14 13.500-14 13.500v-8h-158z" fill="#f00" stroke="#2f5597" stroke-width="3"/></svg>
<svg class="arrow a2" width="178" height="32" viewBox="0 0 178 32"><path d="M2.500 10.500h158v-8l14 13.500-14 13.500v-8h-158z" fill="#f00" stroke="#2f5597" stroke-width="3"/></svg>

</div>
</body>
</html>
```

FILE: styles.css
```css
* { box-sizing: border-box; }
html, body { margin: 0; padding: 0; }
body { width: 1366px; height: 768px; overflow: hidden; background: #fff; font-family: "Open Sans", "Noto Sans", sans-serif; font-size: 12px; color: #444; }
svg { flex: none; display: block; }
.app { position: relative; width: 1366px; height: 768px; display: flex; flex-direction: column; overflow: hidden; }

/* title bar */
.titlebar { height: 34px; background: #2b579a; display: flex; align-items: flex-start; color: #fff; flex: none; }
.qat { width: 274px; height: 32px; display: flex; align-items: center; flex: none; }
.qi { margin-left: 21px; }
.qi2 { margin-left: 13px; }
.qc { margin-left: 3px; }
.qi3 { margin-left: 9px; }
.qc2 { margin-left: 18px; }
.doc-title { width: 355px; line-height: 32px; font-size: 12px; letter-spacing: -.25px; flex: none; }
.tools-title { width: 77px; height: 34px; background: #224279; color: #a9bcd8; line-height: 32px; text-align: center; font-size: 11px; flex: none; }
.win { display: flex; align-items: center; height: 32px; flex: 1; }
.signin { margin-left: 408px; width: 58px; height: 19px; background: #fff; color: #2b579a; text-align: center; line-height: 19px; font-size: 12px; border-radius: 1px; }
.w-opt { margin-left: 25px; }
.w-min { margin-left: 33px; }
.w-max { margin-left: 35px; }
.w-close { margin-left: 35px; }

/* tabs */
.tabs { height: 30px; background: #2b579a; display: flex; align-items: stretch; flex: none; color: #fff; }
.tab { line-height: 29px; font-size: 12px; letter-spacing: -.4px; white-space: nowrap; text-align: center; flex: none; }
.t-file { width: 58px; margin-right: 3px; }
.home { width: 58px; background: #f1f1f1; color: #2b579a; }
.t-ins { width: 56.5px; }
.t-des { width: 63px; }
.t-lay { width: 63px; }
.t-ref { width: 84px; }
.t-mai { width: 72.5px; }
.t-rev { width: 63.500px; }
.t-vie { width: 52px; }
.t-hel { width: 55.5px; }
.format { width: 77px; background: #224279; }
.bulb { margin: 6px 0 0 16px; }
.tell { margin-left: 13px; line-height: 29px; letter-spacing: -.3px; white-space: nowrap; }
.share { margin-left: auto; margin-right: 23px; display: flex; align-items: center; gap: 3px; height: 29px; letter-spacing: -.3px; }

/* ribbon */
.ribbon { height: 93px; background: #f1f1f1; border-bottom: 1px solid #c6c6c6; display: flex; padding-top: 4px; flex: none; position: relative; }
.group { height: 84px; border-right: 1px solid #c6c6c6; display: flex; flex-direction: column; flex: none; }
.g-body { flex: 1; min-height: 0; }
.g-label { height: 16px; text-align: center; line-height: 23px; font-size: 11.5px; letter-spacing: -.1px; color: #444; position: relative; padding-right: 16px; }
.g-plain { padding-right: 0; }
.launch { position: absolute; right: 3px; bottom: 0; }
.g-clip { width: 158px; }
.g-font { width: 263px; }
.g-para { width: 225px; }
.g-styles { width: 606px; }
.g-edit { width: 79px; }
.collapse { position: absolute; right: 10px; top: 81px; }
.clip-body { display: flex; }
.paste { width: 40px; margin-left: 5px; padding-top: 4px; display: flex; flex-direction: column; align-items: center; flex: none; }
.paste svg:first-child { margin-left: 4px; }
.paste-l { line-height: 14px; margin-top: 3px; }
.caret { fill: #666; flex: none; }
.paste-c { margin-top: 7px; margin-left: 0; }
.clip-list { display: flex; flex-direction: column; margin-left: 5px; margin-top: -1px; }
.clip-row { height: 23px; display: flex; align-items: center; gap: 3px; white-space: nowrap; letter-spacing: -.35px; }
.t-row { display: flex; align-items: center; }
.font-body { padding: 8px 0 0 4px; }
.r1 { height: 21px; }
.r2 { height: 23px; margin-top: 8px; }
.combo { height: 21px; border: 1px solid #c6c6c6; background: #fff; display: flex; align-items: center; justify-content: space-between; padding: 0 4px 0 3px; color: #555; flex: none; font-size: 12px; letter-spacing: -.3px; }
.c-name { width: 95px; }
.c-size { width: 42px; margin-left: -1px; }
.c { display: flex; align-items: center; justify-content: center; height: 100%; flex: none; position: relative; }
.w8 { width: 8px; } .w10 { width: 10px; } .w12 { width: 12px; }
.w19 { width: 19px; } .w21 { width: 21px; } .w22 { width: 22px; } .w23 { width: 23px; }
.w24 { width: 24px; } .w25 { width: 25px; } .w26 { width: 26px; } .w28 { width: 28px; } .w30 { width: 30px; } .w32 { width: 32px; }
.ml2 { margin-left: 2px; } .ml4 { margin-left: 4px; } .ml7 { margin-left: 7px; } .ml8 { margin-left: 8px; }
.sep { width: 1px; height: 21px; background: #c6c6c6; flex: none; }
.glyph-a { color: #555; line-height: 1; align-items: flex-end; }
.big { font-size: 17px; }
.small { font-size: 14px; }
.up { margin-bottom: 11px; }
.aa { font-size: 14px; color: #555; }
.bi { font-family: "Liberation Sans", sans-serif; font-size: 12.5px; color: #555; }
.b { font-weight: 700; }
.i { font-style: italic; font-family: "Liberation Serif", serif; font-size: 14px; }
.u { text-decoration: underline; font-weight: 700; }
.st { text-decoration: line-through; }
.bi:nth-child(6), .bi:nth-child(7) { font-weight: 700; }
.sb { font-size: 7px; color: #2f75b5; line-height: 0; }
.sep2 { margin: 0 6px; }
.col { flex-direction: column; justify-content: flex-start; gap: 0; padding-top: 2px; }
.hl-t, .fc-t { line-height: 14px; font-size: 13px; color: #555; height: 14px; position: relative; }
.hl-pen { position: absolute; right: -6px; top: 1px; }
.bar { display: block; width: 16px; height: 4px; }
.yel { background: #ff0; }
.red { background: #f00; }
.para-body { padding-top: 8px; padding-left: 4px; }
.p2 { margin-top: 8px; }
.on { background: #c6c6c6; }
.az { display: flex; flex-direction: column; font-size: 9px; line-height: 8px; color: #2f75b5; margin-right: 2px; }
.z { color: #8a5ab5; }
.az b { font-weight: 700; }
.pil { font-size: 18px; font-family: "Liberation Serif", serif; color: #666; }
.gallery { margin: 2px 0 0 5px; width: 594px; height: 60px; background: #fff; border: 1px solid #c6c6c6; display: flex; }
.sty { width: 72px; height: 58px; display: flex; flex-direction: column; align-items: center; flex: none; padding-top: 6px; }
.first { width: 70px; margin-left: 3px; margin-right: 0; outline: 4px solid #c6c6c6; outline-offset: -4px; }
.pv { display: block; width: 60px; height: 32px; overflow: hidden; white-space: nowrap; font-family: Lato, "Open Sans", sans-serif; line-height: 30px; color: #000; font-size: 13.5px; }
.pv-h1 { font-size: 19px; font-weight: 300; color: #2f5fa8; }
.pv-h2 { font-size: 16px; font-weight: 300; color: #2f5fa8; }
.pv-t { width: 56px; height: 21px; margin: 1px 0 10px; font-size: 30px; font-weight: 300; line-height: 17px; letter-spacing: .5px; }
.pv-s { letter-spacing: .8px; color: #5a5a5a; font-size: 13px; }
.pv-se { font-style: italic; color: #404040; }
.pv-e { font-style: italic; }
.sl { line-height: 14px; margin-top: 1px; margin-right: 2px; white-space: nowrap; color: #555; font-size: 12px; letter-spacing: -.3px; }
.gal-sb { width: 15px; display: flex; flex-direction: column; flex: none; margin-left: 1px; }
.gb { height: 19.5px; border-left: 1px solid #c6c6c6; border-bottom: 1px solid #c6c6c6; display: flex; align-items: center; justify-content: center; }
.gb:last-child { border-bottom: 0; }
.dim { background: #e6e6e6; }
.edit-body { padding-left: 9px; margin-top: -1px; }
.e-c { margin-left: 5px; }
.abac { width: 15px; margin-right: 1px; margin-left: -2px; display: flex; flex-direction: column; font-size: 9px; line-height: 8px; font-family: "Liberation Sans", sans-serif; }
.ab { color: #8a5ab5; }
.ac { color: #555; }
.sel > svg:first-child { margin-left: 2px; margin-right: 3px; }
.s-c { margin-left: -1px; }

/* document */
.doc { height: 532px; display: flex; flex: none; position: relative; background: #fff; }
.picture { margin-left: 23px; width: 1324px; height: 532px; background: #e6e6e6; border-left: 1px solid #8f8f8f; border-right: 1px solid #9a9a9a; padding-top: 11px; display: flex; flex-direction: column; flex: none; position: relative; }
.sheet-wrap { height: 462px; display: flex; flex: none; }
.sheet { width: 1303px; height: 462px; overflow: hidden; flex: none; color: #111; font-family: Lato, "Carlito", sans-serif; font-size: 13.5px; background: #fff; border-right: 1px solid #999; border-bottom: 1px solid #999; }
.row { display: flex; height: 19.4px; border-bottom: 1px solid #dcdcdc; }
.row > span { display: flex; align-items: center; justify-content: center; height: 100%; padding-top: 2px; border-right: 1px solid #dcdcdc; flex: none; }
.rh { width: 25px; background: #e6e6e6; font-size: 12.5px; color: #444; border-right: 1px solid #b5b5b5 !important; }
.row > .rh.sel { height: calc(100% + 1px); background: #d2d2d2; color: #3f7f5f; border-right: 2px solid #217346 !important; }
.ca { width: 62px; } .cb { width: 173px; } .cc { width: 144px; } .cd { width: 105px; } .ce { width: 61px; }
.ch { width: 62px; }
.cq { width: 50px; }
.rest { width: 733px; background: repeating-linear-gradient(90deg, transparent 0 61px, #dcdcdc 61px 62px); border-right: 0 !important; }
.bold { font-weight: 700; }
.hdr { height: 20px; background: #e6e6e6; border-bottom: 1px solid #9a9a9a; color: #444; }
.row.hdr > span { border-right: 1px solid #b5b5b5; font-size: 13px; }
.row > .corner { align-items: flex-end; justify-content: flex-end; padding: 0 3px 3px 0; }
.act { background: #d2d2d2; color: #217346; box-shadow: inset 0 -2px 0 #217346; }
.x-vscroll { width: 15px; margin-left: 3px; padding-top: 3px; display: flex; flex-direction: column; flex: none; background: #e6e6e6; }
.sbtn { width: 14px; height: 14px; background: #fff; border: 1px solid #b0b0b0; display: flex; align-items: center; justify-content: center; flex: none; }
.x-thumb { width: 14px; height: 409px; background: #fff; border: 1px solid #b0b0b0; border-top: 0; flex: none; margin-bottom: auto; }
.sheet-tabs { height: 26px; display: flex; align-items: center; flex: none; position: relative; border-top: 1px solid #b5b5b5; }
.nav-l { margin-left: 25px; }
.nav-r { margin-left: 23px; }
.s-tab { margin-left: 39px; width: 64px; height: 24px; margin-bottom: 1px; background: #fff; color: #217346; font-weight: 700; text-align: center; line-height: 22px; font-family: Lato, sans-serif; font-size: 13.5px; border: 1px solid #b5b5b5; border-top: 0; border-bottom: 2px solid #217346; }
.plus { margin-left: 31px; }
.dots { margin-left: 584px; }
.x-hscroll { margin-left: 15px; width: 495px; display: flex; align-items: center; }
.x-hthumb { width: 434px; height: 14px; background: #fff; border: 1px solid #b0b0b0; border-left: 0; }
.x-hscroll .sbtn:last-child { margin-left: auto; }
.x-status { height: 21px; background: #f1f1f1; display: flex; align-items: center; flex: none; font-size: 11px; color: #444; }
.ready { margin-left: 7px; }
.count { margin-left: auto; margin-right: 17px; }
.v-btn { width: 37px; height: 21px; display: flex; align-items: center; justify-content: center; flex: none; }
.v-btn.on { background: #c6c6c6; }
.zoomer { display: flex; align-items: center; flex: none; }
.zoomer i { font-style: normal; font-size: 14px; color: #555; width: 10px; text-align: center; line-height: 14px; font-weight: 700; }
.track { display: block; height: 2px; background: #b0b0b0; position: relative; flex: none; }
.thumb { position: absolute; top: -5px; width: 5px; height: 12px; background: #666; }
.tick { position: absolute; top: -3px; width: 1px; height: 8px; background: #aaa; text-decoration: none; }
.x-z { margin-left: 3px; }
.x-z .track { width: 97px; margin: 0 1px; }
.x-z .thumb { left: 47px; }
.pct { font-size: 11px; color: #444; margin-left: 10px; }
.x-status .pct { margin-right: 6px; }
.strip { flex: none; }
.strip-t { font-family: "Open Sans", sans-serif; font-size: 11px; fill: #333; }
.handle { position: absolute; width: 11px; height: 11px; border-radius: 50%; background: #fff; border: 1.500px solid #777; top: 181px; }
.h-l { left: -6px; }
.h-r { right: -5px; }
.w-vscroll { width: 19px; background: #dcdcdc; display: flex; flex-direction: column; align-items: center; padding: 2px 0 2px 3px; position: relative; z-index: 2; }
.w-thumb { width: 15px; height: 103px; background: #fff; border: 1px solid #b0b0b0; margin-top: 86px; margin-bottom: auto; flex: none; }

.w-hscroll { height: 18px; background: #dcdcdc; border-top: 1px solid #bdbdbd; border-bottom: 1px solid #bdbdbd; display: flex; align-items: center; padding-left: 3px; flex: none; }
.w-htrack { width: 167px; height: 16px; background: #d6d6d6; }
.w-hthumb { width: 967px; height: 16px; background: #fff; border-left: 1px solid #b0b0b0; border-right: 1px solid #b0b0b0; }
.w-htrack2 { width: 184px; height: 16px; background: #dcdcdc; }
.w-status { height: 21px; background: #f1f1f1; display: flex; align-items: center; flex: none; font-size: 11px; color: #444; padding-bottom: 2px; border-top: 1px solid #fff; }
.st-a { margin-left: 7px; }
.st-b { margin-left: 20px; }
.st-i { margin-left: 18px; }
.st-c { margin-left: 20px; }
.st-v1 { margin-left: auto; }
.v-btn2 { width: 38px; height: 20px; margin-bottom: -2px; background: #c6c6c6; display: flex; align-items: center; justify-content: center; margin-left: 13px; flex: none; }
.st-v3 { margin-left: 14px; }
.w-z { margin-left: 13px; }
.w-z .track { width: 99px; margin: 0 2px; }
.w-z .thumb { left: 62px; }
.w-z .tick { left: 50px; }
.w-status .pct { margin-left: 9px; margin-right: 8px; }

/* taskbar */
.taskbar { height: 40px; background: linear-gradient(90deg, #cfe6ef 0%, #d0e4ee 55%, #d5deeb 100%); display: flex; align-items: center; flex: none; position: relative; font-size: 13px; color: #111; }
.taskbar > svg { position: relative; z-index: 1; }
.tb-win { margin-left: 16px; }
.tb-search { margin-left: 29px; }
.tb-tv { margin-left: 28px; }
.tb-edge { margin-left: 31px; }
.tb-exp { margin-left: 26px; }
.tb-mail { margin-left: 26px; }
.tb-clip { margin-left: 24px; }
.tb-chrome { margin-left: 25px; }
.tb-xl { margin-left: 26px; }
.tb-wd { margin-left: 27px; }
.tb-wx { margin-left: 461px; }
.tb-temp { margin-left: 10px; }
.tb-cond { margin-left: 9px; }
.tb-up { margin-left: 26px; }
.tb-sec { margin-left: 9px; }
.tb-bat { margin-left: 7px; }
.tb-wifi { margin-left: 10px; }
.tb-vol { margin-left: 8px; }
.tb-eng { margin-left: 8px; font-size: 12px; }
.tb-clock { margin-left: 13px; width: 60px; display: flex; flex-direction: column; align-items: center; font-size: 12px; line-height: 19px; }
.tb-note { margin-left: 16px; position: relative; display: block; }
.badge { position: absolute; left: 6px; top: 6px; width: 16px; height: 16px; border-radius: 50%; background: #cfd8e6; border: 1.500px solid #666; font-size: 10px; line-height: 13px; text-align: center; color: #333; font-weight: 700; }
.logo-t { font-family: "Liberation Sans", sans-serif; font-weight: 700; font-size: 12px; fill: #fff; }
.run { position: absolute; bottom: 0; height: 2px; background: #0078d7; }
.run-ch { left: 347px; width: 40px; }
.run-xl { left: 396px; width: 41px; }
.active-tile { position: absolute; left: 441px; top: 0; width: 48px; height: 40px; background: #e6f2f8; border-bottom: 2px solid #0078d7; }

/* dialog */
.dialog { position: absolute; left: 252px; top: 218px; width: 514px; height: 450px; background: #f0f0f0; border: 1px solid #7a7a7a; box-shadow: 1px 2px 8px rgba(0, 0, 0, .35); display: flex; flex-direction: column; color: #222; font-size: 11px; z-index: 3; }
.d-title { height: 29px; background: #fff; display: flex; align-items: center; padding: 0 0 3px 8px; font-size: 11px; flex: none; color: #222; }
.d-help { margin-left: auto; font-size: 13px; }
.d-x { margin: 0 17px 0 36px; }
.d-tabs { height: 26px; display: flex; align-items: flex-end; padding-left: 7px; flex: none; letter-spacing: -.1px; }
.d-tab { height: 18px; line-height: 17px; text-align: center; background: #f0f0f0; border: 1px solid #d9d9d9; border-bottom: 0; margin-right: -1px; color: #222; }
.t1 { width: 56px; } .t2 { width: 70px; } .t3 { width: 53px; } .t4 { width: 54px; } .t5 { width: 51px; }
.active { height: 21px; width: 73px; background: #fff; line-height: 19px; margin-right: 0; margin-bottom: -1px; position: relative; z-index: 1; }
.d-panel { height: 354px; margin: 0 7px 0 6px; width: 499px; background: #fff; border: 1px solid #d9d9d9; padding: 8px 0 0 7px; flex: none; }
.chk { display: flex; align-items: center; gap: 4px; height: 18px; }
.lab { padding: 0 1px; line-height: 14px; }
.focus { outline: 1px dotted #333; }
.d-note { margin: 1px 0 0; line-height: 13px; font-size: 11px; letter-spacing: -.1px; color: #222; }
.d-btns { display: flex; justify-content: flex-end; gap: 10px; padding: 9px 7px 0 0; }
.d-btn { width: 71px; height: 22px; background: #e1e1e1; border: 1px solid #adadad; text-align: center; line-height: 20px; color: #222; font-size: 11px; }
.ok { width: 72px; border: 2px solid #0078d7; line-height: 18px; }

.arrow { position: absolute; z-index: 4; }
.a1 { left: 84px; top: 295px; }
.a2 { left: 438px; top: 633px; }
```
